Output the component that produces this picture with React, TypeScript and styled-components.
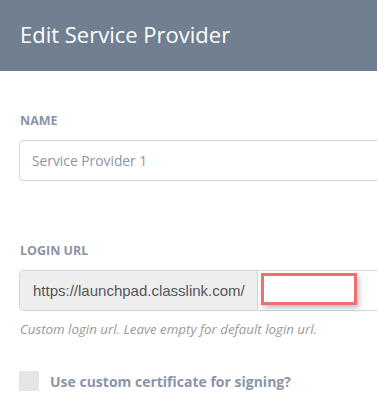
import styled, { createGlobalStyle } from "styled-components";

const GlobalStyle = createGlobalStyle`
  html, body {
    margin: 0;
    padding: 0;
    background: #ffffff;
    overflow: hidden;
    font-family: "Open Sans", "Liberation Sans", sans-serif;
  }
`;

const Page = styled.div`
  width: 620px;
`;

const Header = styled.div`
  display: flex;
  align-items: center;
  height: 71px;
  padding: 0 20px;
  background-color: #708090;
  box-sizing: border-box;
`;

const HeaderTitle = styled.h1`
  margin: 0;
  margin-top: -4px;
  font-size: 22px;
  font-weight: 400;
  color: #ffffff;
`;

const Body = styled.div`
  display: flex;
  flex-direction: column;
  padding: 42px 0 0 19px;
`;

const Field = styled.div<{ $gap?: number }>`
  display: flex;
  flex-direction: column;
  margin-bottom: ${(p) => p.$gap ?? 0}px;
`;

const Label = styled.label`
  font-size: 12.5px;
  font-weight: 700;
  color: #8a94a6;
  line-height: 16px;
  padding-left: 1px;
  margin-bottom: 11px;
`;

const TextInput = styled.div`
  height: 41px;
  box-sizing: border-box;
  border: 1px solid #d3d6dc;
  border-radius: 4px;
  display: flex;
  align-items: center;
  padding-left: 12px;
  font-size: 13.8px;
  color: #8a95a5;
`;

const InputGroup = styled.div`
  display: flex;
  height: 41px;
  box-sizing: border-box;
  border: 1px solid #d3d6dc;
  border-radius: 4px;
`;

const Addon = styled.div`
  display: flex;
  align-items: center;
  width: 224px;
  padding-left: 13px;
  background: #eeeeee;
  border-right: 1px solid #d3d6dc;
  border-radius: 3px 0 0 3px;
  font-family: "Liberation Sans", Arial, sans-serif;
  font-size: 15px;
  color: #555555;
`;

const GroupInput = styled.div`
  position: relative;
  flex: 1;
  background: #ffffff;
`;

const Highlight = styled.div`
  position: absolute;
  left: 3px;
  top: 2px;
  width: 90px;
  height: 26px;
  border: 3px solid #f07070;
  box-shadow: 2px 3px 5px rgba(0, 0, 0, 0.25);
`;

const Help = styled.div`
  margin-top: 9px;
  padding-left: 1px;
  font-size: 13.3px;
  line-height: 18px;
  font-style: italic;
  color: #999999;
`;

const CheckRow = styled.div`
  display: flex;
  align-items: center;
  gap: 11px;
  margin-top: 33px;
`;

const CheckBox = styled.div`
  width: 20px;
  height: 20px;
  background: #e6e6e6;
`;

const CheckLabel = styled.span`
  font-size: 14px;
  font-weight: 700;
  color: #8a94a6;
`;

export default function App() {
  return (
    <Page>
      <GlobalStyle />
      <Header>
        <HeaderTitle>Edit Service Provider</HeaderTitle>
      </Header>
      <Body>
        <Field $gap={62}>
          <Label>NAME</Label>
          <TextInput>Service Provider 1</TextInput>
        </Field>
        <Field>
          <Label>LOGIN URL</Label>
          <InputGroup>
            <Addon>https://launchpad.classlink.com/</Addon>
            <GroupInput>
              <Highlight />
            </GroupInput>
          </InputGroup>
          <Help>Custom login url. Leave empty for default login url.</Help>
        </Field>
        <CheckRow>
          <CheckBox />
          <CheckLabel>Use custom certificate for signing?</CheckLabel>
        </CheckRow>
      </Body>
    </Page>
  );
}
